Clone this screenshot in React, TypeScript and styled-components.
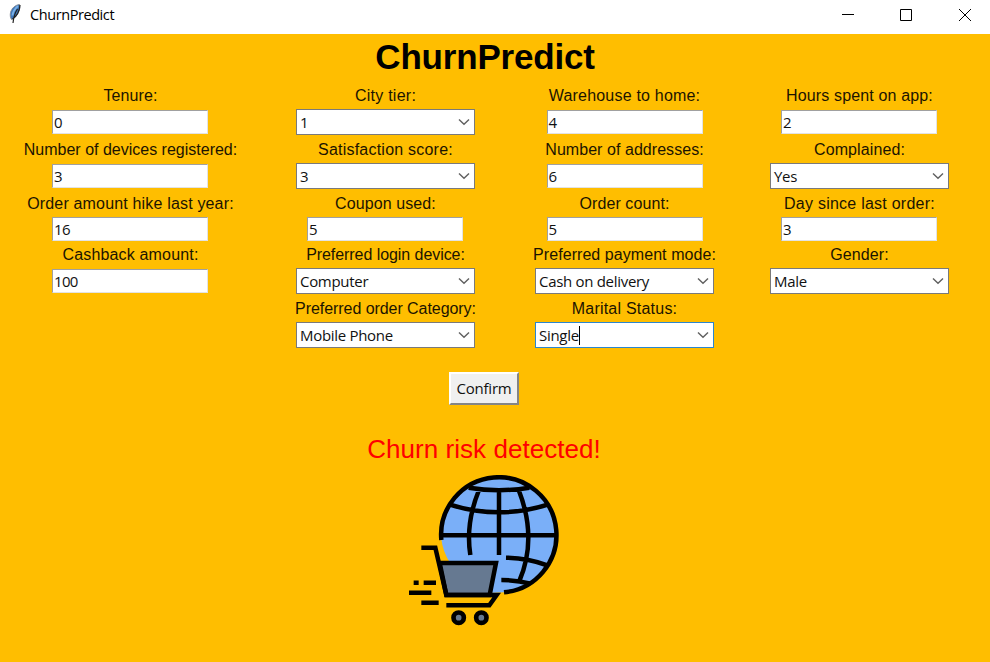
import React from "react";
import styled, { createGlobalStyle, css } from "styled-components";

const GlobalStyle = createGlobalStyle`
  * { box-sizing: border-box; }
  body { margin: 0; background: #ffbe00; overflow: hidden; }
`;

const uiFont = `"Open Sans", "Noto Sans", sans-serif`;
const labelFont = `"Liberation Sans", Arial, sans-serif`;

const Window = styled.div`
  width: 990px;
  height: 662px;
  display: flex;
  flex-direction: column;
  background: #ffbe00;
  color: #000;
`;

const TitleBar = styled.header`
  height: 34px;
  flex: none;
  display: flex;
  align-items: flex-start;
  justify-content: space-between;
  background: #fff;
`;

const Caption = styled.div`
  display: flex;
  padding: 3px 0 0 8px;
  gap: 8px;
`;

const CaptionText = styled.span`
  font: 14.5px/24px ${uiFont};
  letter-spacing: -0.42px;
  white-space: nowrap;
`;

const WindowButtons = styled.div`
  display: flex;
  height: 30px;
`;

const WindowButton = styled.button`
  width: 58px;
  height: 30px;
  padding: 0;
  border: 0;
  background: none;
  display: flex;
  align-items: center;
  justify-content: center;

  &:last-child {
    width: 50px;
    margin-left: 5px;
  }
`;

const Heading = styled.h1`
  margin: 0;
  width: 970px;
  height: 52px;
  text-align: center;
  font: bold 35px/46px ${labelFont};
  letter-spacing: -0.2px;
`;

const Form = styled.main`
  display: grid;
  grid-template-columns: 261px 249px 229px 241px;
  grid-template-rows: 49px 54px 52px 53px 54px;
`;

const Field = styled.div<{ $column: number }>`
  grid-column: ${(p) => p.$column};
  display: flex;
  flex-direction: column;
  align-items: center;
  justify-content: flex-end;
`;

const Label = styled.label<{ $spacing: number }>`
  font: 16px/20px ${labelFont};
  letter-spacing: ${(p) => p.$spacing}px;
  white-space: nowrap;
  margin-bottom: 3px;
  color: #1c1400;
`;

const ControlSlot = styled.div<{ $height: number }>`
  height: ${(p) => p.$height}px;
  display: flex;
  align-items: center;
`;

const controlText = css`
  font: 15px/22px ${uiFont};
  letter-spacing: -0.3px;
  white-space: nowrap;
  color: #111;
  background: #fff;
`;

const Entry = styled.div<{ $inset: number }>`
  ${controlText}
  width: 156px;
  height: 24px;
  margin-right: ${(p) => p.$inset}px;
  padding-left: 1px;
  border: 1px solid;
  border-color: #a0a0a0 #e3e3e3 #e3e3e3 #a0a0a0;
  letter-spacing: -0.7px;
`;

const Combo = styled.div<{ $focused: boolean }>`
  ${controlText}
  width: 179px;
  height: 26px;
  display: flex;
  align-items: center;
  justify-content: space-between;
  padding: 0 4px 0 3px;
  border: 1px solid ${(p) => (p.$focused ? "#2b86cf" : "#7a7a7a")};
`;

const ComboValue = styled.span<{ $caret: boolean }>`
  line-height: 19px;
  ${(p) => p.$caret && "border-right: 1px solid #000;"}
`;

const Actions = styled.section`
  width: 968px;
  display: flex;
  flex-direction: column;
  align-items: center;
`;

const ConfirmButton = styled.button`
  width: 70px;
  height: 33px;
  margin-top: 24px;
  padding: 0 0 2px;
  font: 15px/26px ${uiFont};
  letter-spacing: -0.2px;
  color: #111;
  background: #f0f0f0;
  border: 2px solid;
  border-color: #fff #858585 #858585 #fff;
`;

const Result = styled.p`
  margin: 28px 0 10px;
  font: 26px/32px ${labelFont};
  letter-spacing: 0.05px;
  color: #f00;
  white-space: nowrap;
`;

type FieldSpec = {
  label: string;
  value: string;
  column: number;
  spacing?: number;
  combo?: boolean;
  focused?: boolean;
};

const rows: FieldSpec[][] = [
  [
    { label: "Tenure:", value: "0", column: 1 },
    { label: "City tier:", value: "1", column: 2, spacing: 0.25, combo: true },
    { label: "Warehouse to home:", value: "4", column: 3, spacing: 0.2 },
    { label: "Hours spent on app:", value: "2", column: 4, spacing: 0.15 },
  ],
  [
    { label: "Number of devices registered:", value: "3", column: 1, spacing: 0 },
    { label: "Satisfaction score:", value: "3", column: 2, spacing: 0.22, combo: true },
    { label: "Number of addresses:", value: "6", column: 3, spacing: 0.05 },
    { label: "Complained:", value: "Yes", column: 4, combo: true },
  ],
  [
    { label: "Order amount hike last year:", value: "16", column: 1, spacing: 0.17 },
    { label: "Coupon used:", value: "5", column: 2 },
    { label: "Order count:", value: "5", column: 3 },
    { label: "Day since last order:", value: "3", column: 4, spacing: 0.24 },
  ],
  [
    { label: "Cashback amount:", value: "100", column: 1, spacing: 0.16 },
    { label: "Preferred login device:", value: "Computer", column: 2, spacing: -0.06, combo: true },
    { label: "Preferred payment mode:", value: "Cash on delivery", column: 3, spacing: 0.06, combo: true },
    { label: "Gender:", value: "Male", column: 4, combo: true },
  ],
  [
    { label: "Preferred order Category:", value: "Mobile Phone", column: 2, spacing: -0.06, combo: true },
    { label: "Marital Status:", value: "Single", column: 3, spacing: 0.22, combo: true, focused: true },
  ],
];

const Chevron = () => (
  <svg width="12" height="8" viewBox="0 0 12 8" fill="none" stroke="#606060" strokeWidth="1.4">
    <path d="M1 1.500 6 6.300 11 1.500" />
  </svg>
);

const Feather = () => (
  <svg width="14" height="22" viewBox="0 0 14 22">
    <path d="M11.500 1.500C7 2 3.500 5.500 2.500 9.500 2 12 2.200 14.500 3.500 16.500 8 15 11 9.500 12 4.500Z" fill="#3f78bd" stroke="#7b7f86" strokeWidth=".8" />
    <path d="M10 3C7 5.500 5 8.500 4.500 12.500" fill="none" stroke="#79b0e6" strokeWidth="1.800" />
    <path d="M12 2C11.500 8 8.500 13.500 4.500 16M9.500 6Q6 11 5 20" fill="none" stroke="#222" strokeWidth="1.200" />
  </svg>
);

const GlobeCart = () => (
  <svg width="150" height="151" viewBox="27 30 450 453" fill="none" stroke="#000" strokeWidth="13.500">
    <path d="M124 222A173 173 0 1 1 312 382L270 384 288 294 150 294Q128 258 124 222Z" fill="#7aaff8" stroke="none" />
    <path d="M124 225A173 173 0 1 1 312 382" />
    <path d="M206 68Q297 83 388 68M150 119Q297 165 443 119M124 211H470M297 75V270M237 75Q196 175 211 270M356 75Q413 220 358 348M318 278Q384 279 442 301M304 345Q350 345 392 356" />
    <path d="M119 294H288L269 390H139Z" fill="#667991" />
    <path d="M64 248H106L139 390H290L268 421H139M41 353H56M71 353H108M26 383H94M64 413H116" />
    <circle cx="176" cy="458" r="15.500" fill="#667991" strokeWidth="14" />
    <circle cx="244" cy="458" r="15.500" fill="#667991" strokeWidth="14" />
  </svg>
);

export default function App() {
  return (
    <>
      <GlobalStyle />
      <Window>
        <TitleBar>
          <Caption>
            <Feather />
            <CaptionText>ChurnPredict</CaptionText>
          </Caption>
          <WindowButtons>
            <WindowButton aria-label="Minimize">
              <svg width="12" height="12"><path d="M0 5.500H12" stroke="#000" /></svg>
            </WindowButton>
            <WindowButton aria-label="Maximize">
              <svg width="12" height="12"><path d="M.5.5H11.500V11.500H.5Z" fill="none" stroke="#000" /></svg>
            </WindowButton>
            <WindowButton aria-label="Close">
              <svg width="12" height="12"><path d="M0 0 12 12M12 0 0 12" stroke="#000" /></svg>
            </WindowButton>
          </WindowButtons>
        </TitleBar>
        <Heading>ChurnPredict</Heading>
        <Form>
          {rows.map((row) => {
            const height = row.some((f) => f.combo) ? 26 : 24;
            return row.map((f) => (
              <Field key={f.label} $column={f.column}>
                <Label $spacing={f.spacing ?? 0.1}>{f.label}</Label>
                <ControlSlot $height={height}>
                  {f.combo ? (
                    <Combo $focused={!!f.focused}>
                      <ComboValue $caret={!!f.focused}>{f.value}</ComboValue>
                      <Chevron />
                    </Combo>
                  ) : (
                    <Entry $inset={f.column === 3 ? 0 : 1}>{f.value}</Entry>
                  )}
                </ControlSlot>
              </Field>
            ));
          })}
        </Form>
        <Actions>
          <ConfirmButton>Confirm</ConfirmButton>
          <Result>Churn risk detected!</Result>
          <GlobeCart />
        </Actions>
      </Window>
    </>
  );
}
